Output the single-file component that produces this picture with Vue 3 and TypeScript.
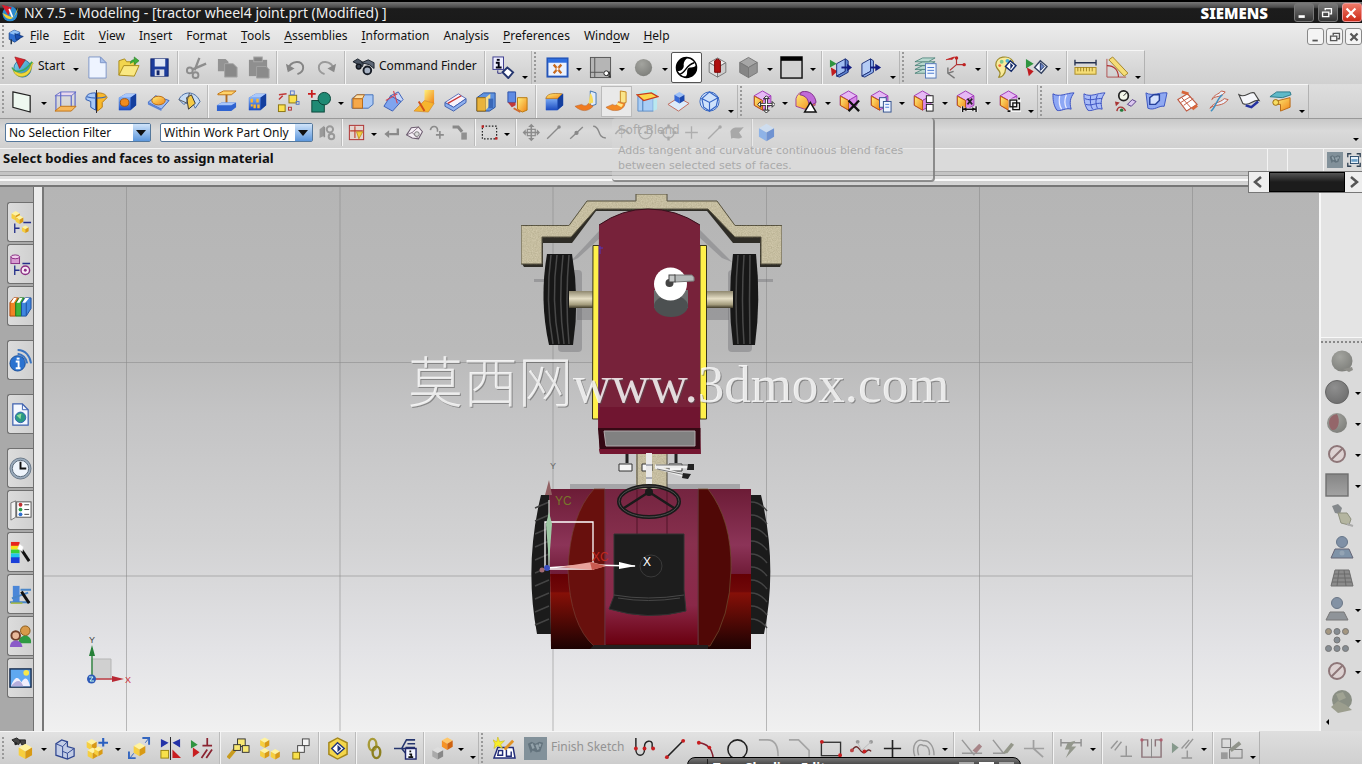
<script setup lang="ts">
import { ref } from 'vue'

type Rec = Record<string, string>

const p = (d: string, f = 'none', s = 'none', w = 1) =>
  `<path d="${d}" fill="${f}" stroke="${s}" stroke-width="${w}"/>`
const c = (x: number, y: number, r: number, f = 'none', s = 'none', w = 1) =>
  `<circle cx="${x}" cy="${y}" r="${r}" fill="${f}" stroke="${s}" stroke-width="${w}"/>`
const b = (x: number, y: number, w: number, h: number, f = 'none', s = 'none', sw = 1) =>
  `<rect x="${x}" y="${y}" width="${w}" height="${h}" fill="${f}" stroke="${s}" stroke-width="${sw}"/>`
const cube = (x: number, y: number, s: number, t: string, l: string, r: string, st = 'none') => {
  const a = s * 0.87
  const h = s / 2
  return (
    p(`M${x} ${y - s}L${x + a} ${y - h}L${x} ${y}L${x - a} ${y - h}Z`, t, st) +
    p(`M${x - a} ${y - h}L${x} ${y}V${y + s}L${x - a} ${y + h}Z`, l, st) +
    p(`M${x + a} ${y - h}L${x} ${y}V${y + s}L${x + a} ${y + h}Z`, r, st)
  )
}
const yel = (x: number, y: number, s: number) => cube(x, y, s, '#fff3a0', '#f7cf3f', '#d99a14')
const synCube = cube(11, 11, 10, '#e6b8f5', '#ffae1a', '#d88ae8', '#a03bb8') + p('M2.500 6.500L11 11V21L2.500 16Z', 'url(#gOrange)', '#b85a10')
const blueBlock = p('M3 8L10 4H21V16L15 21H3Z', '#2a5bd0') + p('M3 8L10 4H21L15 8Z', '#a9c8fb') + p('M15 8L21 4V16L15 21Z', '#143f9e') + b(3, 8, 12, 13, 'url(#gBlue)')
const ban = c(12, 12, 8, '#ddd2d2', '#8e7678', 2) + p('M6.500 17.500L17.500 6.500', 'none', '#8e7678', 2)
const plate = p('M5 15H19L23 23H1Z', '#8f9499', '#777')

const icons: Rec = {
  part: p('M3 7L10 3L18 6V15L11 20L3 16Z', '#2f6fd0', '#103a80') + p('M3 7L10 3L18 6L11 10Z', '#8fc0f5') + p('M11 8L23 12L13 17Z', '#1a4fb0', '#0b2f70') + p('M6 16V23', 'none', '#234', 2),
  nx: c(12, 13, 9, '#2a8ad0') + p('M3 12C8 23 18 22 22 5L16 18Z', '#f4d030') + p('M2 2L14 5L10 15Z', '#d81e2c') + p('M11 7L15 17', 'none', '#fff', 2),
  start: c(12, 13, 9, 'url(#gGlobe)', '#2a79a8') + p('M2 13C3 25 21 25 22 9C24 8 23 6 21 7C20 18 8 22 2 13Z', '#f3d83a', '#9c9a20', 0.6) + p('M4 1L15 4L9 13Z', '#d9252c', '#9c1016', 0.6) + p('M1 12C4 18 14 18 22 6', 'none', '#3ba85a', 1.6),
  new: p('M3 1H15L21 7V23H3Z', '#eef4ff', '#7d95c8') + p('M15 1V7H21Z', '#a9bfe8', '#7d95c8'),
  open: p('M2 20V5L8 3L10 6H19V10', '#f2d54e', '#a88a1a') + p('M2 20L7 10H23L18 21Z', '#fae883', '#a88a1a') + p('M14 8C14 4 17 4 18 4V1L23 5L18 9V6', '#3fae3a', '#217a1e', 0.6),
  save: b(3, 3, 18, 18, '#1c3c9c', '#12256b') + b(7, 3, 11, 8, '#dfe6f4') + b(7, 14, 10, 7, '#d9dce6') + b(9, 15, 3, 5, '#12256b'),
  cut: p('M15 2L10 15M22 8L8 14', 'none', '#8d8d8d', 2.4) + c(5, 15, 3, 'none', '#8d8d8d', 2) + c(11, 20, 3, 'none', '#8d8d8d', 2),
  copy: p('M2 3H10L13 6V16H2Z', '#939393') + p('M9 8H18L22 12V22H9Z', '#898989', '#a6a6a6'),
  paste: b(2, 4, 19, 17, '#8f8f8f') + b(7, 1, 9, 5, '#858585', '#aaa') + p('M10 11H20L23 14V23H10Z', '#8b8b8b', '#a3a3a3'),
  undo: p('M4 14C7 4 20 4 20 12C20 16 17 18 14 19', 'none', '#858585', 2) + p('M2 8L4 17L11 13Z', '#858585'),
  redo: p('M20 14C17 4 4 4 4 12C4 16 7 18 10 19', 'none', '#9a9a9a', 2) + p('M22 8L20 17L13 13Z', '#8a8a8a'),
  finder: p('M1 6L6 3L12 7L11 11L7 9Z', '#4b5563', '#1c222c') + p('M10 7L17 4L23 7V13L18 9Z', '#5d6776', '#1c222c') + c(7, 11, 2.500, '#39414e', '#11151c', 1.500) + c(16, 15, 4, '#a8b3c4', '#161b24', 2),
  info: b(1, 1, 11, 13, '#eef', '#3a3a8c') + b(5, 3, 3, 2, '#001') + p('M4 7H7V12M4 12H10', 'none', '#001', 2) + p('M6 15V18H10', 'none', '#2a2a80') + p('M11 17L16 12L22 17L17 23Z', '#fff', '#25366f', 2),
  fit: b(1.500, 2.500, 21, 19, '#eaf2ff', '#2455b8', 2) + b(2, 3, 20, 4, '#2f6fe0') + p('M8 9L16 18M16 9L8 18', 'none', '#c86a1e', 2.400) + b(11, 12, 2, 3, '#fff'),
  orient: b(1.500, 1.500, 21, 21, '#b5b5b5', '#555') + p('M6 2V22M1 17H15', 'none', '#555') + c(18, 18, 2.500, '#fff', '#222') + p('M19 20L22 22L21 16', 'none', '#222'),
  ball: c(12, 12, 9, 'url(#gGray)'),
  shade: c(12, 12, 10.500, '#fff', '#000', 1.500) + p('M14 1.500A10.500 10.500 0 0 0 2 15C6 17 10 13 9 9C9 6 11 3 14 1.500Z', '#000') + p('M22.500 10A10.500 10.500 0 0 1 9 22C14 21 12 17 13 14C14 11 19 13 22.500 10Z', '#000') + p('M4 19C12 18 10 10 20 7', 'none', '#000', 1.500),
  section: cube(12, 12, 10, '#eee', '#ddd', '#ccc', '#777') + p('M9 5L12 3L15 5V17H9Z', '#b01010', '#700'),
  gcube: cube(12, 12, 10.500, '#a6a6a6', '#858585', '#939393', '#777'),
  window: b(1, 1, 22, 22, '#d2d2d2', '#111', 1.500) + b(1, 1, 22, 4, '#000'),
  clip: p('M1 4L8 8L1 12Z', '#2f9440') + p('M2 12L9 16L3 21Z', '#c01c20') + p('M8 8L17 3V16L8 21Z', '#9fbcf0', '#1c2f78') + p('M17 3L20 5V17L11 22L8 21L17 16Z', '#5d84d0', '#1c2f78') + p('M13 12H20', 'none', '#101a80', 2) + p('M19 8L24 12L19 16Z', '#101a80'),
  clip2: p('M2 8L11 3V16L2 21Z', '#b5ccf5', '#1c2f78') + p('M11 3L14 5V17L5 22L2 21L11 16Z', '#8fb0ee', '#1c2f78') + p('M11 12H18', 'none', '#101a80', 2) + p('M16 8L22 12L16 16Z', '#101a80'),
  layers: [18, 14, 10, 6].map((y) => p(`M1 ${y}L9 ${y - 4}H22L15 ${y}Z`, '#b9d8cf', '#3f7a70', 0.8)).join('') + b(12, 8, 11, 15, '#f0f6ff', '#5478b8') + p('M14 12H21M14 15H21M14 18H21', 'none', '#4878d0'),
  csys: p('M12 9V1M12 9L21 9M12 9L5 15', 'none', '#b03030', 1.200) + c(12, 2, 1.800, '#c02020') + c(20, 9, 1.800, '#c02020') + p('M1 4L10 1L7 4', '#c02020', '#c02020') + p('M3 12V18L10 23M3 18L9 16', 'none', '#777', 1.500),
  palette: p('M2 10C1 0 16 -2 20 6C21 11 12 10 12 14C12 18 8 23 5 22C9 16 3 15 2 10Z', '#f8eb9c', '#9c8a2a', 1.300) + c(8, 6, 2, '#7fc88a') + c(14, 5, 2, '#48b0d8') + c(6, 10, 1.500, '#f26b3a') + p('M12 11L17 5L23 10L18 16Z', '#fff', '#132a68', 1.500) + p('M17 7V14L20 10Z', '#132a68'),
  showhide: p('M1 3L9 8L1 13Z', '#2f9440') + p('M2 12L9 16L4 21Z', '#c01c20') + p('M10 12L16 5L23 11L17 18Z', '#f4f8ff', '#33415f', 1.500) + p('M16 7L20 11L16 15Z', '#6a86c8', '#1d2e60'),
  ruler: p('M1 7H23M1 4V10M23 4V10', 'none', '#25304f', 1.400) + b(1, 12, 22, 7, '#f5dd76', '#ab8c28') + p('M4 12V16M7 12V16M10 12V16M13 12V16M16 12V16M19 12V16', 'none', '#8a6d10', 0.8),
  protractor: p('M2 22V3M2 22H22', 'none', '#b05050') + p('M2 10C10 10 14 15 14 22', 'none', '#b03030', 1.200) + p('M4 4L8 1L24 18L20 21Z', '#f5dd76', '#a3842a'),

  sketch: p('M2 2L20 6V23L2 18Z', '#eef8f0', '#222', 1.300),
  extrude: p('M1 6L7 2H23L18 6Z', '#e8d8ee', '#6a72c8') + p('M7 17V2M22 2V18M18 6V22M2 6V22', 'none', '#5a66c8', 1.200) + p('M1 22L7 17H23L18 22Z', '#f6b85c', '#c27414'),
  revolve: p('M1 8C2 4 6 3 11 3V21L6 18V12L1 10Z', '#a8c8f6', '#2b58b0') + p('M13 3C18 3 22 4 23 8L18 13V18L13 22Z', '#f9b92c', '#b87a10') + p('M2 7C7 9 17 9 22 7', 'none', '#3865b8', 1.200) + p('M12 0V24', 'none', '#223'),
  hole: blueBlock + '<ellipse cx="9" cy="13" rx="4.500" ry="4" fill="#f08c1e" stroke="#a0500a"/>',
  boss: p('M1 13L9 6L23 11L15 20Z', '#9dbaf0', '#3c66c0') + '<ellipse cx="12" cy="11" rx="7" ry="4.500" fill="url(#gOrange)" stroke="#bb6b12"/>' + p('M1 13L15 20V22L1 15Z', '#5a84d8'),
  groove: p('M1 10C5 1 18 0 23 12L18 19C16 13 11 12 6 15Z', '#c7dcf5', '#46699f') + p('M9 8L14 5L18 14L11 20Z', '#f6ca45', '#333') + p('M1 10L10 14M12 3L9 13', 'none', '#555'),
  pad: p('M3 4L9 1H22L17 5H3Z', '#ffd36a', '#c27414') + p('M12 5V14', 'none', '#b06a20', 2) + p('M2 16L7 13H22V18L17 22H2Z', '#2f63d0') + p('M2 16L7 13H22L17 16Z', '#a8c6fa'),
  emboss: blueBlock + p('M6 9V13M9 15V19M12 9V13M13 15V19M5 16H7', 'none', '#ffb62e', 2.500),
  pattern: b(1.500, 15.500, 7, 7, '#fbe14d', '#8a7410') + b(12.500, 5.500, 8, 8, '#fbe14d', '#8a7410') + b(14, 1, 4, 4, 'none', '#5c7cc8') + b(20, 12, 3, 3, 'none', '#5c7cc8') + b(12, 18, 3, 3, 'none', '#b03030') + p('M2 10L6 6M2 5L10 4', 'none', '#c03838', 1.500),
  unite: b(4, 11, 13, 12, '#1f8a74', '#0b463a') + c(17, 9, 6.500, '#1f8a74', '#0b463a') + p('M4 0V8M0 4H8', 'none', '#c81c1c', 1.800),
  shell: p('M1 9L6 5H23V15L18 19H1Z', '#a9c8f5', '#4470b8') + b(2, 9, 10, 10, '#f6a84a', '#b86a18') + p('M2 9L6 5H14L12 9Z', '#fde0a8', '#b86a18'),
  draft: p('M2 17L9 6L20 12L11 22Z', '#7fa4ee', '#3a5fb8') + p('M9 6L17 2L22 10L20 12Z', '#c9d9fa', '#3a5fb8') + p('M4 11L16 4M12 1L16 14', 'none', '#d04a5a', 1.200),
  rib: p('M12 0H22V14L12 11Z', 'url(#gOrange)') + p('M1 22L12 11L22 14L16 23Z', '#f6b42e', '#d0801a', 0.6) + p('M6 12L12 22', 'none', '#d0501a', 2),
  thicken: p('M1 13L15 4L23 9L10 18Z', '#f7f2fb', '#5a6cb8') + p('M1 13V17L10 22L23 13V9L10 18Z', '#8fb0ee', '#3f5fb0') + p('M4 14L18 6', 'none', '#c83232', 1.500),
  trim: p('M2 8L9 3H21V18L15 22H2Z', '#5f93e0', '#28509c') + p('M2 8H11V22H2Z', '#e9b33c', '#97690f') + p('M11 8L16 4V16L11 21Z', '#f7dc8a') + b(14, 9, 5, 10, '#3a68b8'),
  split: p('M2 2H10V13H2Z', '#5f8be4', '#2f54a8') + p('M12 8H22V21L17 23L12 20Z', 'url(#gOrange)', '#b87a10') + p('M2 13L10 13V16L6 18Z', '#c03838') + p('M8 19L15 23', 'none', '#d06a30', 2),
  edge: blueBlock + p('M3 9C4 4 9 3 20 4L15 9Z', 'url(#gOrange)', '#b06a10', 0.7),
  face: p('M17 1L23 3V15L17 17Z', '#dfeafa', '#3f74b0') + p('M17 3C19 5 20 9 20 13L15 15Z', '#f8dc5a') + p('M15 14L20 17C14 23 8 23 1 17L8 15C11 17 13 17 15 14Z', '#f07a1e', '#b86a3a', 0.6),
  soft: p('M16 1L22 2V13L16 15Z', '#fae58a', '#c8881e') + p('M14 12L21 14C20 22 8 24 1 18L8 15C11 17 13 16 14 12Z', '#f48a24', '#b86a3a', 0.6) + p('M13 13L19 15L17 18L12 15Z', '#ffe98a'),
  chamfer: p('M2 6L7 9V22H2ZM7 9L18 7V22H7Z', '#a9cdf5', '#5f8fc8') + p('M1 4L10 0H22L18 4Z', '#b5f0e8') + p('M18 4L22 1V20L18 22Z', '#b9e8f0') + p('M1 5L16 3L23 7L8 11Z', '#fbd74a', '#c83c1c', 1.300),
  offset: p('M1 15L12 8L23 14L12 22Z', '#dcebfa', '#c06a5a') + cube(13, 8, 6, '#9cc0f8', '#3669d8', '#1a47ae'),
  wire: c(12, 12, 10, '#cfe2fb', '#3a68c0') + p('M12 2L4 9L12 13L21 8ZM4 9L6 18L12 22L12 13M21 8L19 17L12 22', 'none', '#3564c4', 1.200),

  move: synCube + p('M15 9V21M9 15H21', 'none', '#222', 3) + p('M15 9V21M9 15H21', 'none', '#fff', 1.200) + p('M15 6L12 9H18ZM15 24L12 21H18ZM6 15L9 12V18ZM24 15L21 12V18Z', '#fff', '#222'),
  resize: p('M1 9C3 2 8 1 13 3L21 10V16L10 20L1 17Z', 'url(#gOrange)', '#a0409a') + p('M7 2C15 0 21 5 22 13L15 17C14 10 12 6 5 5Z', '#c06ad8', '#80308a') + p('M16 13L22 23H10Z', '#fff', '#111', 1.500),
  del: synCube + p('M11 11L22 22M22 11L11 22', 'none', '#111', 2.400),
  copyf: synCube + b(11, 8, 7, 10, '#eef4ff', '#33518f') + b(15, 12, 8, 11, '#eef4ff', '#33518f') + p('M17 15H21M17 18H21', 'none', '#4a7ad8'),
  group: synCube + b(15, 6, 7, 7, '#fff', '#222') + b(15, 15, 7, 7, '#fff', '#222'),
  dim: synCube + p('M8 20H22M8 17V23M22 17V23', 'none', '#fff', 3) + p('M8 20H22M8 17V23M22 17V23', 'none', '#111', 1.500) + p('M13 9L18 15M18 9L13 15', 'none', '#222', 1.700) + p('M8 20L12 18V22ZM22 20L18 18V22Z', '#111'),
  cross: synCube + b(11, 9, 13, 14, '#f4f4f4') + b(12.500, 10.500, 7, 7, 'none', '#111', 1.400) + b(15.500, 13.500, 7, 7, 'none', '#111', 1.400) + p('M10 22H13M21 9H23', 'none', '#111', 2),
  surf1: p('M1 4C8 8 15 3 23 3C19 8 18 13 20 20C14 18 9 23 5 21C1 15 1 9 1 4Z', '#8ea8f5', '#3a4fc0') + p('M8 6C7 12 8 17 10 20M15 5C13 10 13 15 15 19', 'none', '#eef', 1.300),
  surf2: p('M1 4C8 8 15 3 23 3C19 8 18 13 20 20C14 18 9 23 5 21C1 15 1 9 1 4Z', '#a9bcf8', '#3a4fc0') + p('M8 6C7 12 8 17 10 20M15 5C13 10 13 15 15 19M2 9C9 12 15 8 20 9M3 15C9 17 14 13 19 14', 'none', '#3a4fc0'),
  swept: c(10, 6, 5, '#f4f7ea', '#222', 1.800) + p('M10 6L14 2', 'none', '#222') + p('M1 12L6 13L2 17Z', '#a83434') + p('M3 22C4 16 10 17 12 22', 'none', '#a83434', 1.500) + c(8, 21, 1.800, '#257a3a') + p('M14 15L19 10L23 12L18 17Z', '#dcc8f0', '#553a88'),
  nsided: p('M1 3C8 7 16 2 23 3L20 17C14 16 10 22 3 19Z', '#8fa9f2', '#3c56c0') + p('M5 15V8L9 5H15V11L11 15Z', '#d5e2fc', '#25409a', 1.500),
  enlarge: p('M2 10L12 4L22 15L11 22Z', '#fff', '#c05a42', 1.200) + p('M6 8L16 19M8 16L18 9M5 13L15 7', 'none', '#c05a42') + p('M6 2L13 4M17 20L22 16', 'none', '#d8663a', 3),
  bridge: p('M5 10C9 5 14 9 19 2L15 1C12 5 8 4 5 10ZM3 19C9 14 16 18 22 10L18 9C13 14 8 12 3 19Z', '#e9f0fa', '#c05a42') + p('M4 22C9 19 10 9 16 5', 'none', '#3f8fc0', 1.500),
  sheet: p('M1 5C7 9 12 1 17 3L22 11C16 9 12 18 5 14Z', '#f5f6fa', '#444', 1.200) + p('M8 16L14 18L21 12', 'none', '#2532a0', 2.500),
  flow: p('M1 7L8 2H22L23 5L14 8Z', '#5fb9c8', '#2c7a8a') + p('M6 12L22 8V18L12 22V15H6Z', 'url(#gOrange)', '#b86a18') + c(7, 13, 3, '#f8dd62', '#98690f'),

  hgear: p('M8 3L2 8V19L8 16Z', '#9a9a9a') + p('M8 5V18', 'none', '#8f8f8f', 2) + c(15, 8, 4, 'none', '#999', 2.500) + c(17, 17, 3.500, 'none', '#999', 2.500),
  snap: b(3, 3, 18, 18, '#e3d4cf', '#b03838', 1.300) + p('M10 4V19M4 10H20', 'none', '#c03a2a', 1.400) + p('M12 11H20L15 20Z', '#f4cf3e', '#b88a1a'),
  back: p('M20 7V14H9', 'none', '#8a8a8a', 3) + p('M9 9V19L3 14Z', '#8a8a8a'),
  dome: p('M2 15L8 6L17 5L22 11L17 20L9 19Z', '#f5eef5', '#6d5d70', 1.300) + p('M2 15L9 12L17 20M9 12L17 5', 'none', '#6d5d70') + c(15, 14, 3, '#dcdcdc', '#666'),
  hook: p('M3 9C4 3 11 3 12 8L12 11', 'none', '#8b8b8b', 2) + p('M15 10V20M10 15H20', 'none', '#8b8b8b', 2),
  hook2: p('M2 5H9L14 11', 'none', '#888', 4) + b(13, 12, 7, 9, '#909090'),
  rect: '<rect x="3" y="4" width="18" height="16" fill="none" stroke="#222" stroke-width="1.500" stroke-dasharray="2 2"/>' + b(2, 3, 3, 3, '#c02020') + b(19, 18, 3, 3, '#c02020'),
  pan: p('M13 4V21M4 12H22', 'none', '#8c8c8c', 2) + p('M13 1L9 5H17ZM13 23L9 19H17ZM2 12L6 8V16ZM24 12L20 8V16Z', '#8c8c8c') + b(8, 8, 10, 8, 'none', '#8c8c8c', 1.500),
  ln1: p('M4 20L19 5', 'none', '#8a8a8a', 1.700) + c(19, 5, 2.200, '#888'),
  ln2: p('M4 20L20 5', 'none', '#8a8a8a', 1.700) + c(12, 12.500, 2.700, '#888'),
  ln3: p('M4 4C14 4 8 18 20 19', 'none', '#8a8a8a', 1.800),
  ln4: p('M12 4V20M4 12H20', 'none', '#929292', 1.700),
  ln5: c(12, 12, 8, 'none', '#929292', 1.700) + c(12, 12, 1.700, '#888'),
  ln6: c(12, 12, 7, 'none', '#929292', 1.700) + p('M12 2V7M12 17V22M2 12H7M17 12H22', 'none', '#888', 3),
  tang: p('M3 14C8 6 14 6 21 14', 'none', '#8c8c8c', 2) + p('M11 4V19', 'none', '#999'),
  patch: p('M3 10C8 3 12 7 20 5L14 12L18 18C12 22 7 17 4 20Z', '#888'),
  bcube: cube(12, 12, 11, '#c6e0fd', '#5d9af0', '#2a65cc'),

  nav: yel(7, 5, 5) + yel(11, 9, 4.500) + p('M6 13V23M6 18H11M15 12H23', 'none', '#25308a', 1.400) + yel(17, 19, 4),
  cnav: b(2, 4, 9, 7, '#d79ad0', '#8a2f84') + '<ellipse cx="6.500" cy="4" rx="4.500" ry="2" fill="#f0cdec" stroke="#8a2f84"/>' + p('M6 13V23M6 18H11M14 11H22', 'none', '#25308a', 1.400) + c(17, 18, 4.500, '#f8e8f6', '#8a2f84', 1.500) + c(17, 18, 1.500, '#8a2f84'),
  books: p('M1 8L5 3H10L7 8V22H1Z', '#f08424', '#b04a10') + p('M7 8L11 3H16L13 8V22H7Z', '#3fb53a', '#1b7a1c') + p('M13 8L17 3H23V14L18 22H13Z', '#3f86e0', '#1f4f9c') + p('M2 8L5 3H8L5 8ZM8 8L11 3H14L11 8ZM14 8L17 3H21L17 8Z', '#fff') + p('M18 8V21', 'none', '#1f4f9c'),
  web: c(9, 15, 8, '#2a72d0', '#1b4f9a') + b(8, 9, 3, 2, '#fff') + p('M7 13H10V19M7 20H12', 'none', '#fff', 2) + p('M9 1C17 1 22 7 23 15M9 5C15 6 18 10 19 15', 'none', '#3a74c0', 2),
  page: p('M4 1H14L20 7V23H4Z', '#f4f8ff', '#3f62b0', 1.300) + p('M14 1V7H20', 'none', '#3f62b0') + c(12, 15, 5.500, '#2a9a84', '#2f62b0') + p('M8 13L13 11L12 17Z', '#8fdc9a'),
  clock: c(12, 12, 11, '#9aabbc', '#6a7888') + c(12, 12, 8.500, '#eef4fb', '#5a6a7a') + p('M12 5V12H18', 'none', '#111', 2),
  roles: p('M2 4L7 2V19L2 22Z', '#f2f2f2', '#777') + b(8, 3, 15, 16, '#fff', '#555') + c(12, 6, 2, '#c03030') + c(12, 11, 2, '#2f9a4a') + c(12, 16, 2, '#2f6fd0') + p('M16 6H21M16 11H21M16 16H21', 'none', '#444'),
  rainbow: b(2, 1, 9, 5, '#e8241c') + b(2, 5, 9, 4, '#f7e21c') + b(2, 9, 9, 4, '#35d13a') + b(2, 13, 9, 5, '#22c8e8') + b(2, 17, 9, 6, '#1a3fd8') + p('M13 9L21 21', 'none', '#111', 3) + p('M11 3L15 6L14 11L9 8Z', '#fff', '#ddd', 0.6),
  vis: b(4, 3, 7, 17, '#4a86d8') + p('M1 20H22M12 7H23M3 16L20 10', 'none', '#4a86c8', 2) + p('M13 9L21 21', 'none', '#111', 3) + p('M2 21H14', 'none', '#a8b83a', 1.500),
  users: c(17, 6, 5, '#d89a4a', '#8a5a1a') + p('M10 18C10 9 23 9 23 17V19H10Z', '#2f9a42') + c(7, 11, 4.500, '#e8b89a', '#6f3f2a', 2) + p('M1 23C1 14 13 14 14 23Z', '#8a5ac8'),
  image: b(1, 2, 22, 19, '#5fa8f0', '#1a2f50', 1.500) + p('M2 20C6 10 9 9 13 16C17 9 20 12 22 20Z', '#f0eefc') + p('M2 20C9 12 12 14 15 20Z', '#b5aedc') + c(18, 6, 3, '#f8e84a'),

  mGlob: c(12, 12, 10.500, 'url(#gGray)') + p('M13 20L22 18L23 21L19 23Z', '#8f8f8a'),
  mSphere: c(12, 12, 11.500, 'url(#gDark)', '#666'),
  mRed: c(12, 12, 10, 'url(#gGray)') + p('M12 3C3 4 2 14 7 19C13 20 16 10 12 3Z', '#94666a'),
  mBan: ban,
  mBox: b(1, 1, 22, 22, 'url(#gFlat)', '#707070', 1.400),
  mLamp: p('M2 2L8 0L12 4L10 10L5 9Z', '#85898c') + p('M8 9L17 9L21 15L19 21L11 19Z', '#b4b5a0', '#8e907e') + p('M17 20L23 22', 'none', '#aaa', 2),
  mBall1: c(12, 7, 5.500, '#7f90a6', '#66768a') + p('M5 14H19L23 23H1Z', '#7f93a8', '#667') + c(12, 18, 2.500, '#94a4b4'),
  mGrid: p('M5 4H19L23 20H1Z', '#8b8b8b', '#6f6f6f') + p('M4 8H20M3 12H21M2 16H22M9 4L7 20M14 4L16 20', 'none', '#6a6a6a'),
  mBall2: c(12, 6, 5.500, '#8392a4', '#6a7686') + plate,
  mDots: [[3.500, 3.500], [12, 3.500], [20.500, 3.500], [12, 12], [3.500, 20.500], [12, 20.500], [20.500, 20.500]].map(([x, y], i) => c(x, y, 3, i < 3 && i !== 1 ? '#a39680' : '#858c92', '#777')).join(''),
  mGlobe: c(12, 10, 10, '#8a8f84') + p('M1 17L8 11L16 15L22 20L8 23Z', '#9c9e8e') + p('M6 4L13 2L16 8L9 11Z', '#a0a393'),

  aFind: p('M1 3L6 1L10 4L8 8L4 6ZM9 3L15 3L15 9L11 8Z', '#444', '#222') + c(5, 7, 1.500, '#222') + yel(15, 15, 8),
  aWire: p('M2 7L8 3L14 5V10L21 12V20L14 23L2 19Z', '#c3cde6', '#2f4690', 1.300) + p('M2 7L9 10L14 5M9 10V21M9 15L14 17L21 12M14 17V23', 'none', '#2f4690'),
  aAdd: yel(7, 8, 6) + yel(8, 17, 6) + yel(14, 15, 5) + p('M19 1V10M14 6H24', 'none', '#2a5fc0', 2.200),
  aMove: yel(12, 13, 7) + p('M15 1H22V8M1 15V22H8', 'none', '#3466c0', 2) + p('M18 6L22 1M2 22L6 17', 'none', '#3466c0'),
  aMir: p('M2 2L10 6L2 11ZM22 2L14 6L22 11Z', '#2332a8') + p('M12 0V24', 'none', '#222') + b(2, 14, 8, 8, '#f7e04a', '#9b8510') + p('M14 13V22H23Z', '#c81e20'),
  aCon: p('M1 3L8 8L1 12Z', '#2f9440') + p('M3 11L10 16L3 21Z', '#c81e20') + p('M18 1V9M13 9H23', 'none', '#8a2330', 1.800) + p('M12 22L18 13M17 22L23 13', 'none', '#8a2330', 1.800),
  aWrench: p('M1 22L10 11', 'none', '#c89b1e', 4) + b(11, 2, 8, 8, '#f8e873', '#333') + b(7, 8, 7, 6, '#f8e873', '#333') + b(16, 9, 7, 7, '#f8e873', '#333'),
  aThree: yel(7, 6, 5.500) + yel(7, 17, 5.500) + yel(18, 18, 5.500),
  aChain: b(14, 2, 7, 7, '#f4f4f4', '#444') + b(9, 9, 7, 7, '#f4f4f4', '#444') + b(4, 16, 7, 7, '#f8e04a', '#8a7410'),
  aBox: p('M3 6L12 1L22 6V18L12 23L3 18Z', '#f4d64a', '#a3861a', 1.500) + p('M6 12L12 6L19 12L12 18Z', '#fff', '#22367a', 1.500) + p('M12 8V16L16 12Z', '#22367a'),
  aLink: '<ellipse cx="10" cy="8" rx="4" ry="6" fill="none" stroke="#a89b38" stroke-width="2.500"/><ellipse cx="14" cy="16" rx="4" ry="6" fill="none" stroke="#8d8020" stroke-width="2.500"/>',
  aTree: p('M0 12H8L13 3H22M8 12H13M8 12L13 18M14 7H22M12 11H22', 'none', '#26366e', 1.600) + b(12, 12, 11, 11, '#f2f4ff', '#20286c', 1.500) + p('M17 14V16M16 18H18V21M15 21H20', 'none', '#111', 1.800),
  aCubes: cube(17, 7, 6.500, '#ffc76a', '#f59326', '#cf6310') + cube(7, 17, 6.500, '#ddd', '#aaa', '#888'),
  sNew: p('M5 11H21L23 22H1Z', '#fff', '#222c78', 1.500) + p('M6 14H10V19H5ZM14 13V20H19V15', 'none', '#222c78', 1.500) + p('M5 0L7 5L12 4L8 8L10 12L5 9L1 12L2 7L0 3L4 5Z', '#f8ee2a', '#c8b81a', 0.6) + p('M12 13L21 4', 'none', '#e29324', 3),
  finish: b(0, 0, 24, 24, '#82919a') + p('M4 7L8 5L12 7L16 5L20 6L17 15L13 16L9 14L7 17Z', '#63737d') + p('M8 7L10 12M13 8L15 13M17 7L16 10', 'none', '#93a2aa', 2.500),
  sProf: p('M3 1V13C3 21 12 21 12 13V10C12 3 20 3 20 7V12', 'none', '#222', 1.500) + c(3, 12, 2, '#c81e20') + c(12, 12, 2, '#c81e20') + c(21, 12, 2, '#c81e20'),
  sLine: p('M3 21L20 4', 'none', '#222', 1.500) + c(3, 21, 2, '#c81e20') + c(20, 4, 2, '#c81e20'),
  sArc: p('M4 6C14 7 18 13 19 22', 'none', '#842030', 1.500) + c(4, 6, 2, '#c81e20') + c(15, 11, 2, '#c81e20'),
  sCirc: c(12, 13, 10, 'none', '#222', 1.600),
  sFil: p('M2 3H11C18 3 22 8 22 20', 'none', '#a5a5a5', 1.700),
  sCham: p('M1 3H11L22 14V22', 'none', '#a5a5a5', 1.700),
  sRect: b(2.500, 5.500, 20, 14, 'none', '#333', 1.400) + c(3, 5, 2, '#c81e20') + c(22, 19, 2, '#c81e20'),
  sSpl: p('M2 14C7 7 8 11 12 15C16 20 18 10 22 15', 'none', '#6b2a2a', 1.500) + c(2, 14, 2, '#b44') + c(8, 5, 2, '#999') + c(15, 15, 2, '#c81e20') + c(22, 5, 2, '#999') + p('M8 6L12 14L22 5', 'none', '#bbb'),
  sPlus: p('M12 3V22M3 12H21', 'none', '#222', 1.700),
  sOff: p('M3 20C-1 9 5 1 12 4C18 3 23 10 23 19M7 19C4 10 8 6 12 9C16 8 19 13 18 19', 'none', '#9a9a9a', 1.500),
  sTrim: p('M1 3L14 19M1 17H22', 'none', '#999', 1.500) + p('M12 14L19 7L22 10L16 17Z', '#a78588'),
  sExt: p('M1 3L12 17M1 17H14', 'none', '#999', 1.500) + p('M11 17L20 6L23 8L16 17Z', '#94978a'),
  sCor: p('M1 12H22M11 3V12L21 21', 'none', '#a0a0a0', 1.800),
  sDim: p('M1 6H22M1 2V10M22 2V10', 'none', '#909090', 1.500) + p('M8 6L16 4L12 10H17L6 22L10 13H5Z', '#93978c'),
  sPar: p('M2 12L9 4M6 14L13 5M18 9V20M12 20H24', 'none', '#979797', 1.500),
  sMir: p('M2 3H8V10M2 3V21H22V3H16V10', 'none', '#8c7479', 1.500) + p('M12 2V22', 'none', '#888') + c(2, 3, 1.700, '#b06070') + c(22, 3, 1.700, '#b06070'),
  sShow: p('M1 6L8 11L1 17Z', '#86998c') + p('M11 12L19 3M15 12L23 2M17 14V22M11 22H22', 'none', '#979797', 1.500),
  sRel: b(2, 2, 9, 9, 'none', '#777') + b(10, 13, 13, 9, 'none', '#777') + b(1, 16, 7, 7, '#9a9a9a') + p('M11 14L21 6', 'none', '#90938a', 4)
}

const captions: Rec = { start: 'Start', finder: 'Command Finder', finish: 'Finish Sketch' }

// ":" grip, "|" divider, "v" drop-down arrow, "_" overflow arrow, "w" both arrows
const bar = (s: string) => s.trim().split(/\s+/)
const kinds: Rec = { ':': 'grip', '|': 'divider', v: 'arrow', _: 'more', w: 'both' }

const standard = bar(
  ': start v new open save | cut copy paste | undo redo | finder | info _ : fit v orient v ball v shade section gcube v window v | clip clip2 _ : layers csys v | palette showhide v | ruler protractor _'
)
const feature = bar(
  ': sketch v extrude revolve hole boss groove | pad emboss pattern unite v shell draft rib thicken trim split | edge face soft chamfer offset wire _ : move v resize v del copyf v group v dim v cross _ : surf1 surf2 swept nsided enlarge bridge sheet flow _'
)
const selection = bar('hgear | snap v back dome hook hook2 | rect v | pan ln1 ln2 ln3 tang ln5 ln6 ln4 ln1 patch | bcube')
const bottom = bar(
  ': aFind v aWire aAdd v aMove aMir aCon | aWrench aThree aChain | aBox | aLink aTree | aCubes w : sNew finish sProf sLine sArc sCirc sFil sCham sRect sSpl sPlus sOff v | sTrim sExt sCor | sDim v | sPar sMir sShow v | sRel _'
)
const tabGroups = [['nav', 'cnav', 'books'], ['web'], ['page'], ['clock', 'roles', 'rainbow', 'vis', 'users', 'image']]
const materials = bar('mGlob mSphere+ mRed+ mBan+ mBox+ mLamp mBall1 mGrid mBall2+ mDots+ mBan+ mGlobe').map((m) => ({
  icon: m.replace('+', ''),
  arrow: m.endsWith('+')
}))
const menus = [
  ['', 'F', 'ile'], ['', 'E', 'dit'], ['', 'V', 'iew'], ['In', 's', 'ert'], ['Fo', 'r', 'mat'], ['', 'T', 'ools'],
  ['', 'A', 'ssemblies'], ['', 'I', 'nformation'], ['Ana', 'l', 'ysis'], ['', 'P', 'references'], ['Wind', 'o', 'w'], ['', 'H', 'elp']
]
const filter = ref('No Selection Filter')
const scope = ref('Within Work Part Only')
const active = ref('shade')
const treads = [0, 1, 2, 3, 4, 5, 6, 7, 8, 9]
</script>

<template>
  <div class="app">
    <header class="title">
      <svg class="logo" viewBox="0 0 24 24" v-html="icons.nx"></svg>
      <h1>NX 7.5 - Modeling - [tractor wheel4 joint.prt (Modified) ]</h1>
      <span class="brand">SIEMENS</span>
      <div class="winbtns">
        <button aria-label="Minimize"><svg viewBox="0 0 18 18"><path d="M4 13H11" stroke="#fff" stroke-width="3" /></svg></button>
        <button aria-label="Restore"><svg viewBox="0 0 18 18"><path d="M7 6V4H14V10H12M4 8H11V13H4Z" fill="none" stroke="#fff" stroke-width="1.500" /></svg></button>
        <button class="close" aria-label="Close"><svg viewBox="0 0 18 18"><path d="M4 4L14 14M14 4L4 14" stroke="#fff" stroke-width="2.500" /></svg></button>
      </div>
    </header>

    <nav class="menu">
      <i class="grip"></i>
      <svg class="logo" viewBox="0 0 24 24" v-html="icons.part"></svg>
      <button v-for="m in menus" :key="m.join('')">{{ m[0] }}<u>{{ m[1] }}</u>{{ m[2] }}</button>
      <div class="docbtns">
        <button aria-label="Minimize document"><svg viewBox="0 0 18 18"><path d="M5 13H11" stroke="#555" stroke-width="2" /></svg></button>
        <button aria-label="Restore document"><svg viewBox="0 0 18 18"><path d="M7 7V5H14V11H12M4 8H11V13H4Z" fill="none" stroke="#555" stroke-width="1.500" /></svg></button>
        <button aria-label="Close document"><svg viewBox="0 0 18 18"><path d="M5 5L13 13M13 5L5 13" stroke="#555" stroke-width="2.500" /></svg></button>
      </div>
    </nav>

    <div v-for="(row, ri) in [standard, feature]" :key="ri" class="band">
      <div class="tools">
        <template v-for="(t, i) in row" :key="i">
          <i v-if="kinds[t]" :class="kinds[t]"></i>
          <button v-else class="tool" :class="{ pressed: t === active, hover: t === 'soft' }" :aria-label="captions[t] ?? t" @click="active = t">
            <svg viewBox="0 0 24 24" v-html="icons[t]"></svg><span v-if="captions[t]">{{ captions[t] }}</span>
          </button>
        </template>
      </div>
    </div>

    <div class="selbar">
      <label class="combo"><select v-model="filter" aria-label="Type filter"><option>No Selection Filter</option></select><b></b></label>
      <label class="combo wide"><select v-model="scope" aria-label="Selection scope"><option>Within Work Part Only</option></select><b></b></label>
      <template v-for="(t, i) in selection" :key="i">
        <i v-if="kinds[t]" :class="kinds[t]"></i>
        <button v-else class="tool small" :aria-label="t"><svg viewBox="0 0 24 24" v-html="icons[t]"></svg></button>
      </template>
      <i class="more last"></i>
    </div>

    <div class="prompt">
      <p>Select bodies and faces to assign material</p>
      <div class="cells">
        <i></i><i></i><i></i>
        <svg viewBox="0 0 24 24" v-html="icons.finish"></svg>
        <svg viewBox="0 0 18 18"><path d="M2 6V2H6M12 2H16V6M16 12V16H12M6 16H2V12" fill="none" stroke="#345" stroke-width="1.500" /><rect x="5" y="5" width="9" height="8" fill="#e8f2fa" stroke="#246" /><path d="M6 8H13V11H6Z" fill="#6aa0c8" /></svg>
      </div>
    </div>
    <div class="tray"></div>

    <main>
      <aside class="resource">
        <div v-for="(g, gi) in tabGroups" :key="gi" class="tabs">
          <button v-for="t in g" :key="t" :aria-label="t"><svg viewBox="0 0 24 24" v-html="icons[t]"></svg></button>
        </div>
      </aside>
      <div class="splitter"></div>

      <section class="view">
        <svg class="scene" viewBox="44 187 1275 544" preserveAspectRatio="xMidYMid slice">
          <defs>
            <linearGradient id="gBlue" x1="0" y1="0" x2="0" y2="1"><stop offset="0" stop-color="#7fb0f8" /><stop offset="1" stop-color="#1c4cc0" /></linearGradient>
            <linearGradient id="gOrange" x1="0" y1="0" x2="1" y2="1"><stop offset="0" stop-color="#fff07a" /><stop offset="1" stop-color="#f08418" /></linearGradient>
            <linearGradient id="gGlobe" x1="0" y1="0" x2="1" y2="1"><stop offset="0" stop-color="#8fe0f0" /><stop offset="1" stop-color="#1878b8" /></linearGradient>
            <radialGradient id="gGray" cx="0.4" cy="0.3" r="0.8"><stop offset="0" stop-color="#a3a49f" /><stop offset="1" stop-color="#7b7c78" /></radialGradient>
            <radialGradient id="gDark" cx="0.4" cy="0.3" r="0.8"><stop offset="0" stop-color="#8f8f8f" /><stop offset="1" stop-color="#6c6c6c" /></radialGradient>
            <linearGradient id="gFlat" x1="0" y1="0" x2="0" y2="1"><stop offset="0" stop-color="#858585" /><stop offset="1" stop-color="#a3a3a3" /></linearGradient>
            <linearGradient id="gAxle" x1="0" y1="0" x2="0" y2="1"><stop offset="0" stop-color="#8f886f" /><stop offset="0.450" stop-color="#e6dfc6" /><stop offset="0.800" stop-color="#a39b7c" /><stop offset="1" stop-color="#3f3a28" /></linearGradient>
            <linearGradient id="gFender" x1="0" y1="0" x2="0" y2="1"><stop offset="0" stop-color="#6c1c36" /><stop offset="0.350" stop-color="#8c3458" /><stop offset="0.530" stop-color="#701c38" /><stop offset="0.531" stop-color="#640004" /><stop offset="0.640" stop-color="#700808" /><stop offset="0.650" stop-color="#861008" /><stop offset="1" stop-color="#1c0202" /></linearGradient>
            <linearGradient id="gDeck" x1="0" y1="0" x2="0" y2="1"><stop offset="0" stop-color="#742440" /><stop offset="0.350" stop-color="#88304e" /><stop offset="0.750" stop-color="#8a2848" /><stop offset="1" stop-color="#6a0010" /></linearGradient>
            <filter id="noise" x="0" y="0" width="1" height="1"><feTurbulence type="fractalNoise" baseFrequency="0.8" numOctaves="2" result="n" /><feColorMatrix in="n" type="matrix" values="0 0 0 0 0.25  0 0 0 0 0.22  0 0 0 0 0.1  0 0 0 0.6 -0.12" result="m" /><feComposite in="m" in2="SourceGraphic" operator="in" result="g" /><feMerge><feMergeNode in="SourceGraphic" /><feMergeNode in="g" /></feMerge></filter>
          </defs>

          <path d="M126.500 187V731M340 187V731M553 187V731M766.500 187V731M979.500 187V731M1192.500 187V731M44 362.500H1192M44 576H1192" stroke="#888" stroke-opacity="0.55" fill="none" />

          <g fill="#6b6b70" fill-opacity="0.4">
            <path d="M570 262L600 230V238L578 258ZM732 262L700 230V238L722 258ZM534 279H546V282H534ZM758 279H773V282H758Z" />
            <rect x="558" y="270" width="24" height="82" rx="4" /><rect x="728" y="270" width="24" height="82" rx="4" />
            <rect x="570" y="484" width="170" height="6" /><rect x="577" y="306" width="18" height="14" /><rect x="707" y="306" width="22" height="14" />
          </g>
          <path d="M521 262L524 267H543V243H572L596 211H707L733 243H760V267H780L782 262V236H736L709 206H590L568 236H521Z" fill="#2e2c26" />
          <g filter="url(#noise)" fill="#d0c8ab">
            <path d="M521 225.500H569L587 201H636V194H667V201H717L735 225.500H782V264H761V237H735L708 209H596L571 237H542V264H521Z" stroke="#4d493c" />
            <rect x="636" y="450" width="31" height="42" />
          </g>
          <path d="M637 454V492M667 454V492" stroke="#4d493c" />
          <g fill="#171717">
            <path d="M547 254H572Q580 300 573 345H549Q539 300 547 254Z" /><path d="M733 254H756Q761 300 755 345H733Q727 300 733 254Z" />
          </g>
          <path d="M551 255Q545 300 553 344M557 255Q551 300 559 344M563 255Q558 300 564 344M569 255Q565 300 569 344M738 255Q734 300 738 344M744 255Q741 300 744 344M750 255Q749 300 750 344" fill="none" stroke="#484848" stroke-width="1.500" />
          <rect x="569" y="291" width="26" height="17" fill="url(#gAxle)" /><rect x="704" y="291" width="29" height="17" fill="url(#gAxle)" />
          <path d="M593 245.500H600V419H592.500ZM700 245.500H706.500V419H700Z" fill="#fff04a" stroke="#39351a" />
          <path d="M599 225Q622 209 648 209Q676 209 700 225V419L701 454H600L598 419Z" fill="#77223a" />
          <path d="M599 225Q622 209 648 209Q676 209 700 225" fill="none" stroke="#38101c" />
          <path d="M599 407H700V430H598Z" fill="#701530" />
          <path d="M598 428H700.500L700 454H600Z" fill="#350914" /><path d="M599 449H700L700 454H600Z" fill="#741530" />
          <path d="M604 431H695V446H606Z" fill="#818181" stroke="#b0a8aa" /><path d="M599 245V410" stroke="#532070" /><path d="M599 248H603M600 246V254" stroke="#5535c0" />
          <rect x="654" y="290" width="34" height="18" fill="#6a6e6e" /><ellipse cx="671" cy="306" rx="17" ry="11" fill="#4c5051" />
          <circle cx="670.500" cy="284" r="16.500" fill="#fff" /><circle cx="669.500" cy="283" r="4" fill="#444" />
          <path d="M674 275L692 275Q695 277 694 281L675 282Z" fill="#b5b9b9" stroke="#777" /><rect x="669" y="275" width="6" height="7" fill="#c5c8c8" stroke="#444" />

          <path d="M627 454V463M676 454V463" stroke="#222" stroke-width="3" />
          <path d="M619 464H632V471H619ZM669 464H682V471H669ZM642 464H652V471H642Z" fill="#f5f5f5" stroke="#333" />
          <path d="M655 466L690 467M655 467L686 476" stroke="#eee" stroke-width="3" /><path d="M657 469L686 475M656 465H688" stroke="#777" />
          <path d="M688 464H694V470H687ZM683 473L691 474L688 479L682 478Z" fill="#222" />

          <path d="M549 495H541Q524 565 537 634H551ZM750 495H761Q778 565 764 634H750Z" fill="#1b1b1b" />
          <g stroke="#444" stroke-width="1.500" fill="none">
            <path v-for="n in treads" :key="n" :d="`M535 ${508 + n * 13}L549 ${502 + n * 13}M751 ${502 + n * 13}Q760 ${502 + n * 13} 767 ${511 + n * 13}`" />
          </g>
          <path d="M549 489H751V649H551Z" fill="url(#gFender)" />
          <path d="M594 489H708V646H594Z" fill="#520606" />
          <path d="M594 489H605V646H594Q570 625 568 570Q570 515 594 489Z" fill="#68100d" stroke="#754035" stroke-width="0.7" />
          <path d="M698 489H708Q732 520 731 570Q730 618 710 646H698Z" fill="#500806" stroke="#705030" stroke-width="0.7" />
          <path d="M605 489H698V644H605Z" fill="url(#gDeck)" /><path d="M605 489V645M698 489V645" stroke="#653040" />
          <path d="M594 645H708V649H590Z" fill="#252020" />
          <path d="M637 490V535M667 490V535" stroke="#501528" />
          <ellipse cx="649" cy="501.500" rx="30" ry="15.500" fill="none" stroke="#1a1a1a" stroke-width="4" /><ellipse cx="649" cy="501.500" rx="30" ry="15.500" fill="none" stroke="#5a5a5a" stroke-width="0.8" />
          <path d="M649 492L624 508M649 492L674 508" stroke="#1a1a1a" stroke-width="2.500" /><circle cx="649" cy="492" r="4" fill="#1a1a1a" /><path d="M649 453V484" stroke="#e9e9e9" stroke-width="6" /><path d="M646 465H652M646 478H652" stroke="#6d7385" />
          <path d="M614 534H684V590L686 611Q648 621 609 609L614 596Z" fill="#1d1d1d" stroke="#333" /><path d="M614 595Q648 601 684 595M618 598Q648 603 680 598" fill="none" stroke="#484848" />
          <circle cx="651" cy="566" r="11" fill="none" stroke="#3a3a3a" />

          <g fill="none" stroke="#fff" stroke-width="1.300"><path d="M545 522H593V569H545Z" /><path d="M549 500V567" stroke="#c8d0c8" /><path d="M545 568L590 565L635 566" /></g>
          <path d="M549 512L552 524L549 563L546 524Z" fill="#9fc8a4" /><path d="M549 480L552 495H545Z" fill="#926063" />
          <path d="M560 567L592 562L606 566L592 570Z" fill="#e8a39c" /><path d="M590 562L606 566L592 570Z" fill="#c85a50" /><path d="M619 562L636 566L619 569Z" fill="#fff" />
          <circle cx="547" cy="568" r="3" fill="#3b4fc0" /><circle cx="542" cy="570" r="2.500" fill="#a26a72" />
          <text class="axis" x="555" y="505" fill="#78762a">YC</text><text class="axis" x="592" y="561" fill="#c02820">XC</text>
          <text class="axis" x="643" y="566" fill="#fff">X</text><text class="tiny" x="550" y="469" fill="#666">Y</text>

          <path d="M92 659H111V679H92Z" fill="#d0d0d0" stroke="#b5b5b5" /><path d="M92 679V648" stroke="#388a48" stroke-width="1.500" /><path d="M92 645L95 656H89Z" fill="#268038" />
          <path d="M92 679H115" stroke="#c04048" stroke-width="1.500" /><path d="M124 679L112 676V682Z" fill="#b82834" /><circle cx="91.500" cy="679" r="4.500" fill="#2f5ab8" /><path d="M89 677H93L90 681H94" fill="none" stroke="#cfe" />
          <text class="tiny" x="89" y="643" fill="#444">Y</text><text class="tiny" x="125" y="683" fill="#d03038">X</text>

          <text class="mark" x="408" y="402"><tspan class="cjk">莫西网</tspan><tspan>www.3dmox.com</tspan></text>
        </svg>
      </section>

      <aside class="side">
        <div class="spacer"></div>
        <i class="hgrip"></i>
        <div v-for="(m, i) in materials" :key="i" class="mat" :class="{ arrowed: m.arrow }">
          <button :aria-label="m.icon"><svg viewBox="0 0 24 24" v-html="icons[m.icon]"></svg></button>
          <i v-if="m.arrow" class="arrow"></i>
        </div>
        <i class="leftarrow"></i>
      </aside>
    </main>

    <footer class="bottom">
      <div class="tools">
        <template v-for="(t, i) in bottom" :key="i">
          <i v-if="kinds[t]" :class="kinds[t]"></i>
          <button v-else class="tool" :class="{ dim: t === 'finish' }" :aria-label="captions[t] ?? t">
            <svg viewBox="0 0 24 24" v-html="icons[t]"></svg><span v-if="captions[t]">{{ captions[t] }}</span>
          </button>
        </template>
      </div>
    </footer>

    <div class="tip" role="tooltip"><strong>Soft Blend</strong><span>Adds tangent and curvature continuous blend faces between selected sets of faces.</span></div>
    <div class="mini"><button aria-label="Previous"><svg viewBox="0 0 18 18"><path d="M12 4L6 9L12 14" fill="none" stroke="#555" stroke-width="2.500" /></svg></button><i></i><button aria-label="Next"><svg viewBox="0 0 18 18"><path d="M6 4L12 9L6 14" fill="none" stroke="#555" stroke-width="2.500" /></svg></button></div>
    <div class="float"><i></i><span>True Shading Editor</span><b></b><b class="bar"></b><b class="x"></b></div>
  </div>
</template>

<style>
html,
body {
  height: 100%;
  overflow: hidden;
}
</style>

<style scoped>
.app {
  position: relative;
  display: flex;
  flex-direction: column;
  height: 100vh;
  overflow: hidden;
  background: #d6d6d6;
  color: #111;
  font: 12px/16px 'Noto Sans', 'Open Sans', sans-serif;
}
button {
  padding: 0;
  border: 0;
  background: none;
  color: inherit;
  font: inherit;
}
svg {
  display: block;
  flex: none;
}
.title {
  display: flex;
  align-items: center;
  height: 23px;
  flex: none;
  box-sizing: border-box;
  border-top: 2px solid #000;
  background: linear-gradient(#777 0, #4a4a4a 25%, #1c1c1c 32%, #1a1a1a);
  color: #eee;
}
.title .logo {
  width: 20px;
  height: 20px;
  margin-right: 4px;
}
.title h1 {
  flex: 1;
  margin: 0;
  font-size: 14px;
  line-height: 18px;
  font-weight: 400;
  white-space: nowrap;
}
.brand {
  color: #fff;
  font: 900 15px/18px 'Noto Sans', sans-serif;
}
.winbtns {
  display: flex;
  gap: 4px;
  margin-left: 26px;
}
.winbtns button {
  width: 20px;
  height: 19px;
  border: 1px solid #777;
  border-radius: 3px;
  background: linear-gradient(#777, #333);
}
.winbtns .close {
  border-color: #e99;
  background: linear-gradient(#f07a68, #cc2a18);
}
.winbtns svg,
.docbtns svg {
  width: 16px;
  height: 16px;
}
.menu {
  display: flex;
  align-items: center;
  height: 27px;
  flex: none;
  padding-bottom: 1px;
  box-sizing: border-box;
  background: linear-gradient(#ececec, #dfdfdf);
}
.menu .logo {
  width: 17px;
  height: 17px;
}
.menu > button {
  margin-left: 14px;
}
.menu > .logo + button {
  margin-left: 6px;
}
.menu u {
  text-underline-offset: 2px;
}
.docbtns {
  display: flex;
  gap: 2px;
  margin-left: auto;
}
.docbtns button {
  width: 17px;
  height: 17px;
  border: 1px solid #888;
  border-radius: 3px;
  background: #f4f4f4;
}
.band,
.bottom {
  display: flex;
  flex: none;
  height: 34px;
  background: linear-gradient(#dedede, #d0d0d0);
}
.tools {
  display: flex;
  align-items: center;
  box-sizing: border-box;
  border-top: 1px solid #f6f6f6;
  border-right: 1px solid #b2b2b2;
  background: linear-gradient(#e2e2e2, #cdcdcd);
}
.tool {
  display: flex;
  align-items: center;
  height: 31px;
  flex: none;
  padding: 0 3px;
  border: 1px solid transparent;
  box-sizing: border-box;
  white-space: nowrap;
}
.tool svg {
  width: 23px;
  height: 23px;
}
.tool span {
  margin: 0 1px 3px 4px;
}
.tool.pressed {
  border-color: #555;
  border-radius: 2px;
  background: #fff;
}
.tool.hover {
  border-color: #bbb;
  background: #e9e9e9;
}
.tool.dim {
  color: #939393;
}
.tool.small {
  width: 23px;
  padding: 0 1px;
}
.tool.small svg {
  width: 19px;
  height: 19px;
}
.grip {
  width: 7px;
  height: 24px;
  flex: none;
  background: radial-gradient(circle, #999 1px, transparent 1px) 1px 0 / 4px 4px repeat-y;
}
.more + .grip,
.both + .grip {
  width: 11px;
  height: 100%;
  border-left: 1px solid #b5b5b5;
  box-sizing: border-box;
}
.divider {
  width: 6px;
  height: 100%;
  flex: none;
  background: linear-gradient(90deg, transparent 2px, #bbb 2px, #bbb 3px, #f4f4f4 3px, #f4f4f4 4px, transparent 4px);
}
.arrow,
.more,
.both {
  position: relative;
  width: 12px;
  height: 100%;
  flex: none;
}
.both {
  width: 20px;
}
.arrow::before,
.more::after,
.both::before,
.both::after {
  position: absolute;
  left: 3px;
  top: 50%;
  border: 3px solid transparent;
  border-top-color: #000;
  border-bottom: 0;
  content: '';
}
.more::after,
.both::after {
  top: auto;
  bottom: 5px;
}
.both::before {
  left: 0;
}
.both::after {
  left: 12px;
}
.selbar {
  display: flex;
  align-items: center;
  flex: none;
  height: 31px;
  padding: 0 0 2px 5px;
  box-sizing: border-box;
  border-top: 1px solid #999;
  border-bottom: 1px solid #f4f4f4;
  background: linear-gradient(#c8c8c8, #dadada 40%, #d0d0d0);
}
.combo {
  display: flex;
  width: 146px;
  height: 19px;
  margin-right: 9px;
  box-sizing: border-box;
  border: 1px solid #55789c;
  border-radius: 2px;
  background: #fff;
}
.combo.wide {
  width: 153px;
  margin-right: 3px;
}
.combo select {
  flex: 1;
  min-width: 0;
  padding: 0 0 0 3px;
  border: 0;
  appearance: none;
  background: none;
  color: #111;
  font: inherit;
}
.combo b {
  position: relative;
  width: 17px;
  background: linear-gradient(#d0e4fa, #5d97dc);
}
.combo b::after {
  position: absolute;
  left: 3px;
  top: 6px;
  border: 5px solid transparent;
  border-top: 6px solid #111;
  border-bottom: 0;
  content: '';
}
.last {
  margin-left: auto;
}
.prompt {
  display: flex;
  flex: none;
  height: 22px;
  background: #dadada;
}
.prompt p {
  flex: 1;
  margin: 0 0 0 3px;
  font-size: 13px;
  line-height: 19px;
  font-weight: 700;
}
.cells {
  display: flex;
  align-items: center;
  gap: 3px;
}
.cells i {
  width: 16px;
  height: 100%;
  border-left: 1px solid #f4f4f4;
}
.cells i:nth-child(2) {
  width: 32px;
}
.cells i:nth-child(3) {
  width: 0;
}
.cells svg {
  width: 16px;
  height: 16px;
}
.tray {
  flex: none;
  height: 16px;
  box-sizing: border-box;
  border-top: 1px solid #aaa;
  border-bottom: 2px solid #777;
  background: linear-gradient(#c4c4c4 3px, #999 3px, #999 4px, #dedede 4px, #dedede 7px, #fafafa 7px, #fafafa 9px, #cfcfcf 9px, #d6d6d6);
}
main {
  display: flex;
  flex: 1;
  min-height: 0;
}
.resource {
  display: flex;
  flex-direction: column;
  gap: 14px;
  width: 26px;
  flex: none;
  padding: 15px 0 0 7px;
  background: #a9a9a9;
}
.tabs {
  display: flex;
  flex-direction: column;
  gap: 2px;
}
.tabs button {
  height: 40px;
  padding-left: 1px;
  box-sizing: border-box;
  border: 1px solid #707070;
  border-right: 0;
  border-radius: 3px 0 0 3px;
  background: linear-gradient(90deg, #dcdcdc, #d0d0d0);
}
.tabs svg {
  width: 23px;
  height: 23px;
}
.splitter {
  width: 11px;
  flex: none;
  box-sizing: border-box;
  border-left: 1px solid #707070;
  border-right: 2px solid #777;
  background: #ebebeb;
}
.view {
  flex: 1;
  min-width: 0;
  overflow: hidden;
  background: linear-gradient(#b5b5b5, #bababa 30%, #c4c4c5 42%, #d2d2d3 65%, #e3e3e6 85%, #f0f0f0);
}
.scene {
  width: 100%;
  height: 100%;
}
.axis {
  font: 12px 'Liberation Sans', sans-serif;
}
.tiny {
  font: 9px 'Liberation Sans', sans-serif;
}
.mark {
  fill: #fff;
  fill-opacity: 0.82;
  font: 53px 'Liberation Serif', serif;
  filter: drop-shadow(1px 1px 0 #555a);
}
.cjk {
  font: 300 55px 'Noto Sans CJK SC', sans-serif;
}
.side {
  display: flex;
  flex-direction: column;
  width: 43px;
  flex: none;
  box-sizing: border-box;
  border-left: 2px solid #f8f8f8;
  background: #dadada;
}
.spacer {
  flex: 1;
  border-bottom: 1px solid #f8f8f8;
  background: #e4e4e4;
}
.hgrip {
  height: 7px;
  background: radial-gradient(circle, #888 1px, transparent 1px) 3px 2px / 4px 4px repeat-x;
}
.mat {
  display: flex;
  align-items: center;
  justify-content: center;
  height: 31px;
}
.mat.arrowed {
  padding-left: 4px;
  justify-content: flex-start;
  gap: 3px;
}
.mat svg {
  width: 24px;
  height: 24px;
}
.leftarrow {
  width: 0;
  margin: 2px 0 6px 5px;
  border: 3px solid transparent;
  border-right-color: #000;
  border-left: 0;
}
.bottom {
  height: 33px;
}
.tip {
  position: absolute;
  left: 612px;
  top: 118px;
  display: flex;
  flex-direction: column;
  width: 323px;
  height: 64px;
  padding: 4px 6px;
  box-sizing: border-box;
  border-right: 2px solid #777c;
  border-bottom: 2px solid #777c;
  border-radius: 4px;
  background: #d9d9d966;
  color: #aaa;
  font-family: 'DejaVu Sans', sans-serif;
  font-size: 11px;
}
.tip strong {
  margin-bottom: 4px;
  font-size: 12px;
  font-weight: 400;
  line-height: 17px;
}
.tip span {
  line-height: 15px;
}
.mini {
  position: absolute;
  right: 0;
  top: 171px;
  display: flex;
  width: 114px;
  height: 22px;
  box-sizing: border-box;
  border: 1px solid #777;
  border-right: 0;
  background: #eee;
}
.mini i {
  flex: 1;
  border: 1px solid #000;
  background: linear-gradient(#555, #1c1c1c 50%);
}
.mini button {
  width: 20px;
}
.mini button:last-child {
  width: 17px;
}
.mini svg {
  width: 18px;
  height: 18px;
}
.float {
  position: absolute;
  left: 687px;
  bottom: -15px;
  display: flex;
  gap: 5px;
  width: 334px;
  height: 22px;
  padding: 1px 6px;
  box-sizing: border-box;
  border: 1px solid #000;
  border-radius: 8px 8px 0 0;
  background: linear-gradient(#777, #444 7px);
  color: #fff;
  font-size: 13px;
  font-weight: 700;
}
.float i {
  width: 13px;
  border-right: 1px solid #222;
}
.float span {
  flex: 1;
}
.float b {
  width: 15px;
  height: 12px;
  margin-top: 3px;
  border-top: 2px solid #aaa;
}
.float .bar {
  border-color: #fff;
}
</style>
